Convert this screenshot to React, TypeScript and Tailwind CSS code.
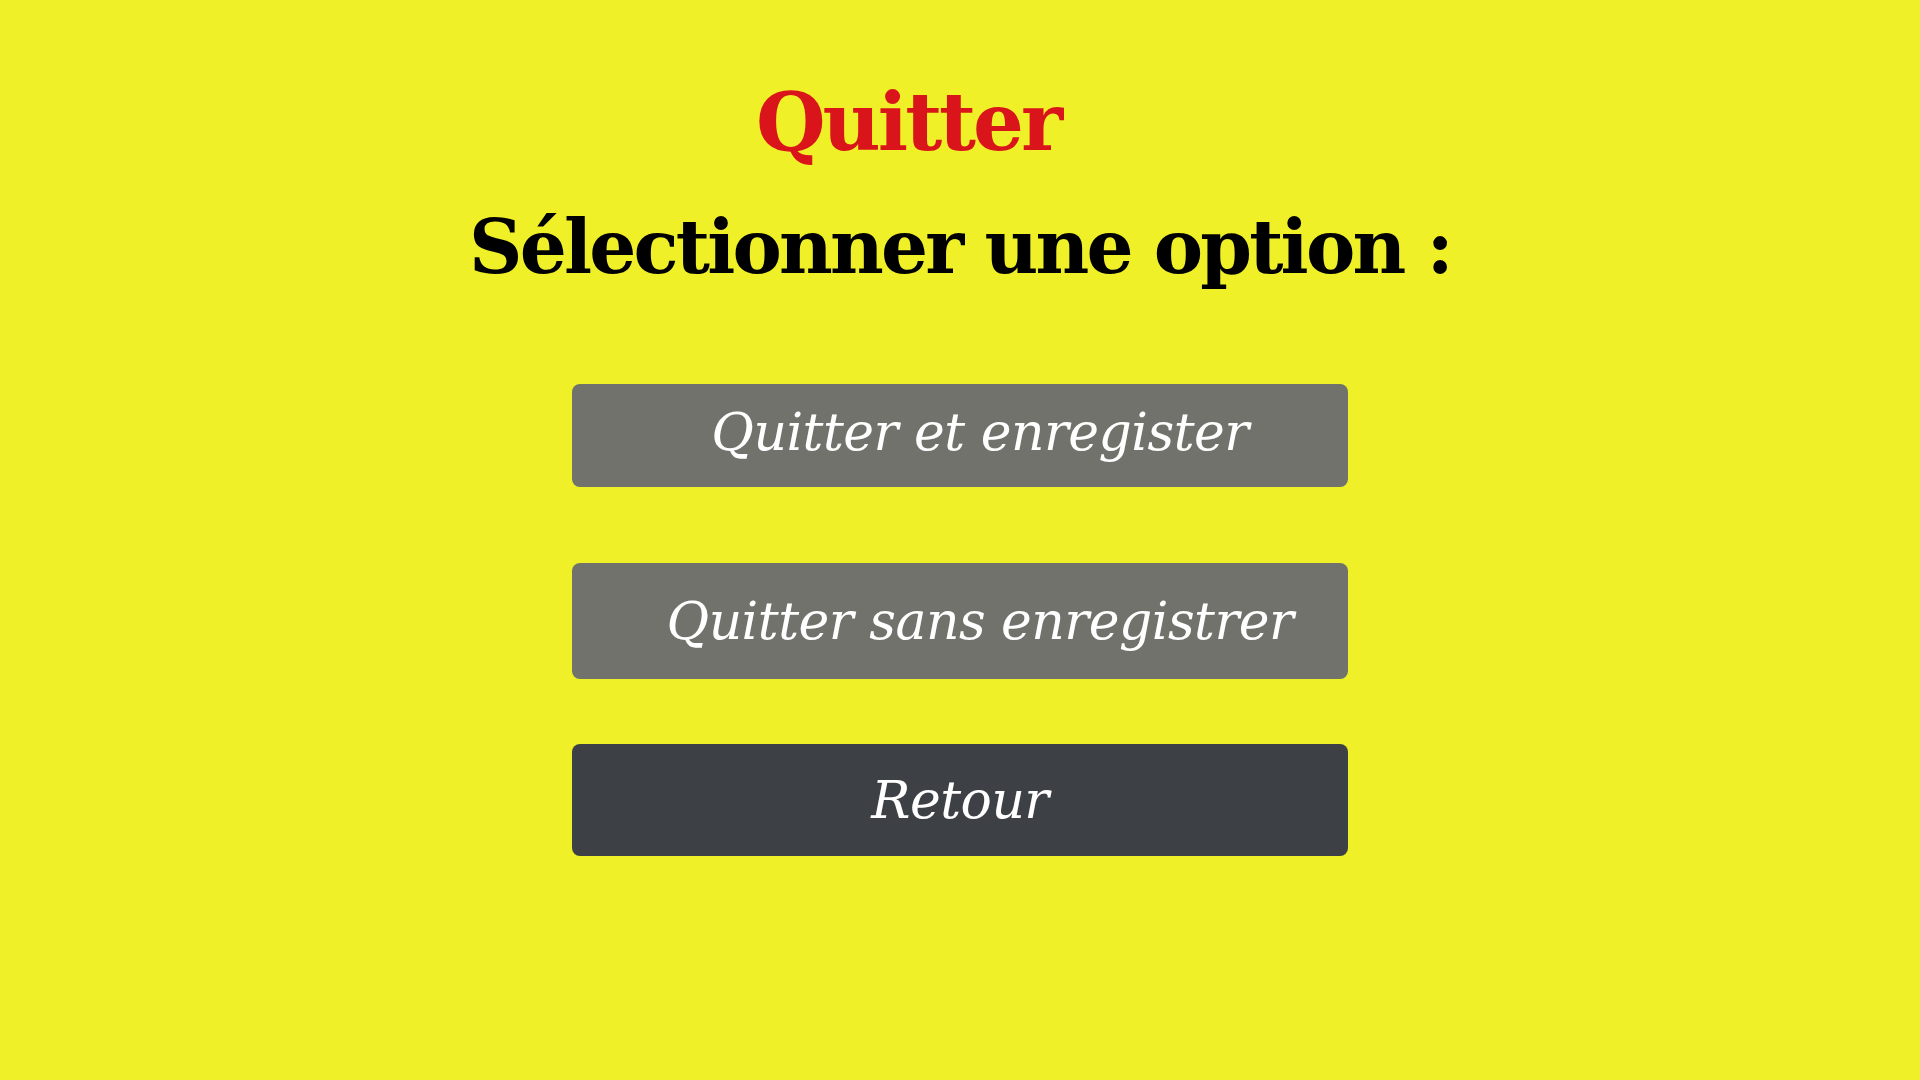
export default function App() {
  const serif = { fontFamily: '"DejaVu Serif", "Liberation Serif", serif' };

  return (
    <div className="w-full h-screen bg-[#f0f028] flex flex-col items-center" style={serif}>
      <h1 className="mt-[72px] mr-[104px] text-[80px] leading-[100px] font-bold text-[#d9141a] tracking-[-3px]">
        Quitter
      </h1>
      <h2 className="mt-[30px] text-[74px] leading-[90px] font-bold text-black tracking-[-2.8px]">
        Sélectionner une option :
      </h2>
      <div className="mt-[92px] flex flex-col w-[776px]">
        <button className="h-[103px] rounded-[8px] bg-[#72726c] text-white italic text-[52px] pl-[40px] pb-[8px] tracking-[-0.5px]">
          Quitter et enregister
        </button>
        <button className="mt-[76px] h-[116px] rounded-[8px] bg-[#72726c] text-white italic text-[52px] pl-[40px] tracking-[-0.5px]">
          Quitter sans enregistrer
        </button>
        <button className="mt-[65px] h-[112px] rounded-[8px] bg-[#3d4044] text-white italic text-[52px] tracking-[-0.5px]">
          Retour
        </button>
      </div>
    </div>
  );
}
